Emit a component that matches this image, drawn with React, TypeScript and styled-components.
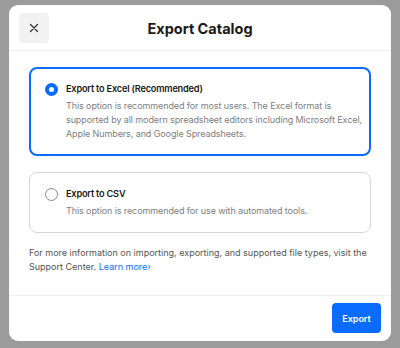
import React, { FC, useState } from 'react'
import styled, { createGlobalStyle } from 'styled-components'

const BLUE = '#0a6cff'

const GlobalStyle = createGlobalStyle`
  html, body {
    margin: 0;
    padding: 0;
    background: #9b9b9b;
    font-family: Inter, 'Noto Sans', sans-serif;
    -webkit-font-smoothing: antialiased;
  }
`

const Backdrop = styled.div`
  width: 400px;
  height: 348px;
  padding: 5px 9px 0;
  box-sizing: border-box;
`

const Modal = styled.div`
  width: 382px;
  height: 336px;
  background: #fff;
  border-radius: 9px;
  display: flex;
  flex-direction: column;
  overflow: hidden;
`

const Header = styled.div`
  display: grid;
  grid-template-columns: 30px 1fr 30px;
  align-items: center;
  padding: 8px 10px 7px;
  border-bottom: 1px solid #f0f0f0;
`

const CloseButton = styled.button`
  width: 30px;
  height: 30px;
  border: none;
  border-radius: 4px;
  background: #f2f2f2;
  display: flex;
  align-items: center;
  justify-content: center;
  padding: 0;
  cursor: pointer;
`

const Title = styled.h1`
  margin: 0;
  text-align: center;
  font-size: 14.5px;
  font-weight: 700;
  color: #1a1a1a;
`

const Body = styled.div`
  flex: 1;
  padding: 16px 20px 0;
  display: flex;
  flex-direction: column;
  gap: 16px;
`

const Card = styled.label<{ $selected: boolean }>`
  display: grid;
  grid-template-columns: 13px 1fr;
  column-gap: 8px;
  padding: ${p => (p.$selected ? '13px 6px 13px 14px' : '14px 7px 14px 15px')};
  border: ${p => (p.$selected ? `2px solid ${BLUE}` : '1px solid #d6d6d6')};
  border-radius: 8px;
  cursor: pointer;
`

const Radio = styled.span<{ $checked: boolean }>`
  width: 13px;
  height: 13px;
  margin-top: 0.5px;
  border-radius: 50%;
  box-sizing: border-box;
  border: ${p => (p.$checked ? `4px solid ${BLUE}` : '1.5px solid #8a8a8a')};
  background: #fff;
`

const OptionTitle = styled.div`
  font-size: 9.2px;
  font-weight: 600;
  line-height: 14px;
  letter-spacing: -0.2px;
  color: #1a1a1a;
`

const OptionText = styled.p`
  grid-column: 2;
  margin: 3px 0 0;
  font-size: 9px;
  line-height: 14px;
  letter-spacing: -0.1px;
  color: #808080;
`

const Info = styled.p`
  margin: -3px 0 0;
  font-size: 9px;
  line-height: 13.5px;
  color: #555;
`

const Link = styled.a`
  color: ${BLUE};
  text-decoration: none;
`

const Footer = styled.div`
  display: flex;
  justify-content: flex-end;
  padding: 7px 10px 8px;
  border-top: 1px solid #f0f0f0;
`

const ExportButton = styled.button`
  width: 49px;
  height: 30px;
  border: none;
  border-radius: 4px;
  background: ${BLUE};
  color: #fff;
  font-family: inherit;
  font-size: 9px;
  font-weight: 600;
  cursor: pointer;
`

const options = [
  {
    id: 'excel',
    title: 'Export to Excel (Recommended)',
    text: 'This option is recommended for most users. The Excel format is supported by all modern spreadsheet editors including Microsoft Excel, Apple Numbers, and Google Spreadsheets.',
  },
  {
    id: 'csv',
    title: 'Export to CSV',
    text: 'This option is recommended for use with automated tools.',
  },
]

const App: FC = () => {
  const [format, setFormat] = useState('excel')
  return (
    <>
      <GlobalStyle />
      <Backdrop>
        <Modal>
          <Header>
            <CloseButton aria-label="Close">
              <svg width="10" height="10" viewBox="0 0 10 10">
                <path d="M1.5 1.5l7 7M8.5 1.5l-7 7" stroke="#333" strokeWidth="1.3" strokeLinecap="round" />
              </svg>
            </CloseButton>
            <Title>Export Catalog</Title>
            <span />
          </Header>
          <Body>
            {options.map(o => (
              <Card key={o.id} $selected={format === o.id} onClick={() => setFormat(o.id)}>
                <Radio $checked={format === o.id} />
                <OptionTitle>{o.title}</OptionTitle>
                <OptionText>{o.text}</OptionText>
              </Card>
            ))}
            <Info>
              For more information on importing, exporting, and supported file types, visit the Support
              Center. <Link href="#">Learn more›</Link>
            </Info>
          </Body>
          <Footer>
            <ExportButton>Export</ExportButton>
          </Footer>
        </Modal>
      </Backdrop>
    </>
  )
}

export default App
